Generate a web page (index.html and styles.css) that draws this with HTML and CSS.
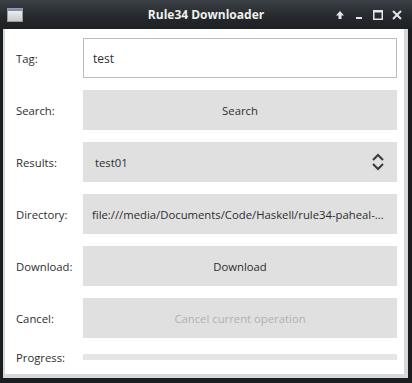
FILE: index.html
```html
<!DOCTYPE html>
<html>
<head>
<meta charset="utf-8">
<link rel="stylesheet" href="styles.css">
</head>
<body>
<div class="window">
  <div class="titlebar">
    <svg class="appicon" width="16" height="14" viewBox="0 0 16 14">
      <defs>
        <linearGradient id="g" x1="0" y1="0" x2="0" y2="1">
          <stop offset="0" stop-color="#f4f4f4"/>
          <stop offset="1" stop-color="#c8c8c8"/>
        </linearGradient>
      </defs>
      <rect x="0.5" y="0.5" width="15" height="13" fill="url(#g)" stroke="#9a9a9a"/>
      <rect x="1" y="1" width="14" height="2" fill="#7d8fb8"/>
    </svg>
    <div class="title">Rule34 Downloader</div>
    <div class="controls">
      <svg width="12" height="12" viewBox="0 0 12 12"><path d="M6 2 L2 6.5 H4.5 V10 H7.5 V6.5 H10 Z" fill="#e6e6e6"/></svg>
      <svg width="12" height="12" viewBox="0 0 12 12"><rect x="3" y="8" width="6" height="2" fill="#e6e6e6"/></svg>
      <svg width="12" height="12" viewBox="0 0 12 12"><rect x="1.75" y="1.75" width="8.5" height="8.5" fill="none" stroke="#e6e6e6" stroke-width="1.5"/><rect x="1" y="1" width="10" height="2.5" fill="#e6e6e6"/></svg>
      <svg width="12" height="12" viewBox="0 0 12 12"><path d="M2 2 L10 10 M10 2 L2 10" stroke="#e6e6e6" stroke-width="2"/></svg>
    </div>
  </div>
  <div class="frame">
    <div class="content">
      <div class="row">
        <div class="label">Tag:</div>
        <div class="field input">test</div>
      </div>
      <div class="row">
        <div class="label">Search:</div>
        <div class="field button">Search</div>
      </div>
      <div class="row">
        <div class="label">Results:</div>
        <div class="field combo">
          <span>test01</span>
          <svg class="chev" width="14" height="20" viewBox="0 0 14 20">
            <path d="M2 8 L7 3 L12 8 M2 12 L7 17 L12 12" fill="none" stroke="#3a3a3a" stroke-width="2"/>
          </svg>
        </div>
      </div>
      <div class="row">
        <div class="label">Directory:</div>
        <div class="field text">file:///media/Documents/Code/Haskell/rule34-paheal-...</div>
      </div>
      <div class="row">
        <div class="label">Download:</div>
        <div class="field button">Download</div>
      </div>
      <div class="row">
        <div class="label">Cancel:</div>
        <div class="field button disabled">Cancel current operation</div>
      </div>
      <div class="row progress-row">
        <div class="label">Progress:</div>
        <div class="bar"></div>
      </div>
    </div>
  </div>
</div>
</body>
</html>
```

FILE: styles.css
```css
html, body {
  margin: 0;
  padding: 0;
}
body {
  width: 412px;
  height: 383px;
  overflow: hidden;
  font-family: "Open Sans", "Noto Sans", sans-serif;
}
.window {
  width: 412px;
  height: 383px;
  display: flex;
  flex-direction: column;
  background: #1b1e21;
}
.titlebar {
  height: 29px;
  flex: none;
  display: flex;
  align-items: center;
  position: relative;
  background: linear-gradient(#3b4146, #24282c 60%, #1d2124);
  color: #f0f0f0;
}
.appicon {
  margin-left: 7px;
  margin-top: 1px;
}
.title {
  position: absolute;
  left: 0;
  right: 0;
  text-align: center;
  font-weight: bold;
  font-size: 12px;
  line-height: 29px;
  pointer-events: none;
}
.controls {
  margin-left: auto;
  margin-right: 9px;
  display: flex;
  gap: 7px;
  align-items: center;
}
.frame {
  flex: 1;
  display: flex;
  padding: 0 4px 5px 3px;
  min-height: 0;
}
.content {
  flex: 1;
  background: #fff;
  border-left: 2px solid #d6d8da;
  border-right: 4px solid #d6d8da;
  border-bottom: 4px solid #d6d8da;
  padding: 9px 7px 0 11px;
  display: flex;
  flex-direction: column;
  gap: 12px;
  overflow: hidden;
  font-size: 11.3px;
  color: #2e2e2e;
}
.row {
  display: flex;
  align-items: center;
  height: 40px;
  flex: none;
}
.label {
  width: 67px;
  flex: none;
}
.field {
  flex: 1;
  height: 40px;
  box-sizing: border-box;
  display: flex;
  align-items: center;
}
.input {
  border: 1px solid #bcbcbc;
  padding-left: 9px;
  font-size: 12px;
}
.button {
  background: #e0e0e0;
  justify-content: center;
}
.disabled {
  color: #b1b1b1;
}
.combo {
  background: #e0e0e0;
  padding-left: 12px;
  padding-right: 12px;
  justify-content: space-between;
}
.text {
  background: #e0e0e0;
  padding-left: 9px;
  white-space: nowrap;
  overflow: hidden;
}
.progress-row {
  height: 14px;
}
.bar {
  flex: 1;
  height: 6px;
  background: #e6e6e6;
}
```
